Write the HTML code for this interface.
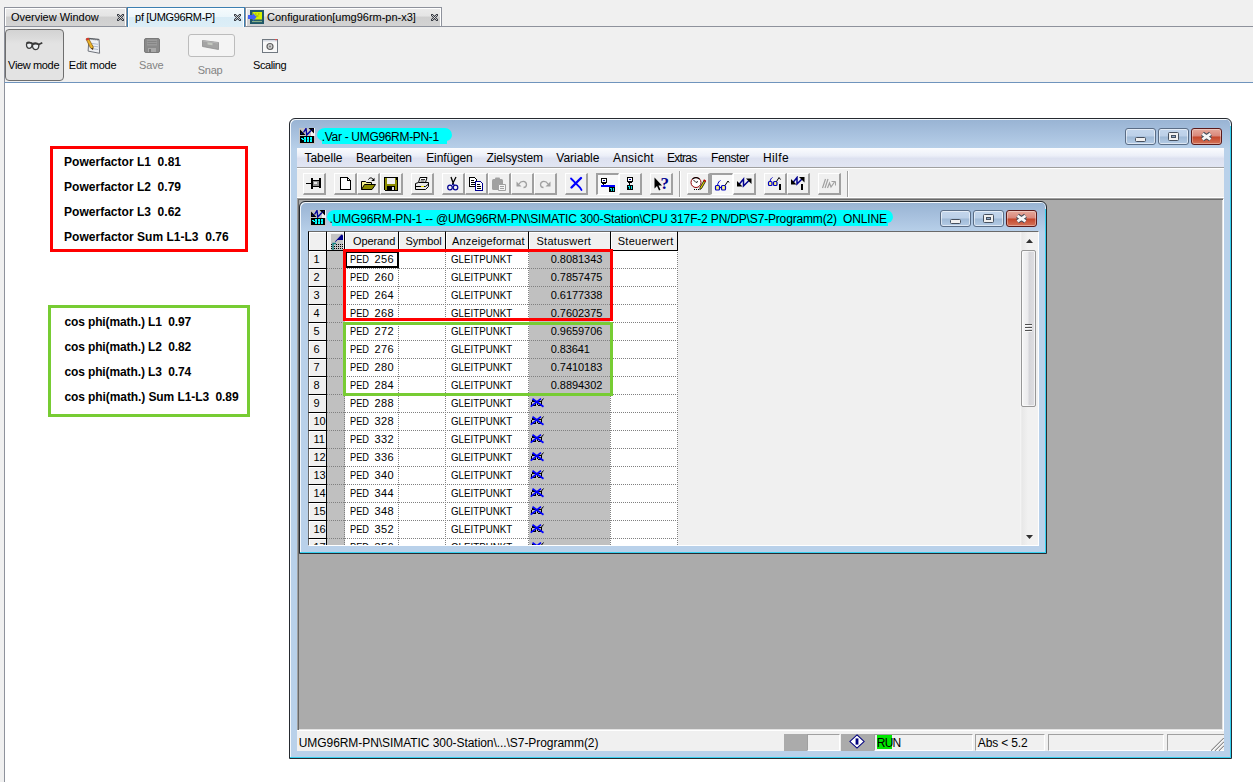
<!DOCTYPE html>
<html><head><meta charset="utf-8"><title>pf [UMG96RM-P]</title>
<style>
*{box-sizing:border-box;margin:0;padding:0}
html,body{width:1253px;height:782px;overflow:hidden;background:#f0f0f0}
body{position:relative;font-family:"Liberation Sans",sans-serif;font-size:11px;color:#000}
.a{position:absolute}
.t{position:absolute;white-space:nowrap;line-height:1}
.tab{position:absolute;top:7px;height:19px;border:1px solid #8e929c;border-bottom:0;background:linear-gradient(#ebebeb 0,#e4e4e4 45%,#cfcfcf 50%,#d3d3d3 100%);box-shadow:inset 1px 1px 0 #fff,inset -1px 0 0 #fff}
.tab.sel{height:20px;background:linear-gradient(#f6fbfd 0,#ecf6fb 45%,#d9ecf6 50%,#dceef7 100%);border-color:#3c7fb1}
.btn3{position:absolute;top:173px;width:23px;height:22px;border:solid;border-width:1px 2px 2px 1px;border-color:#fff #a0a0a0 #a0a0a0 #fff;background:#f0f0f0}
.btn3.dn{border-width:2px 1px 1px 2px;border-color:#a0a0a0 #fff #fff #a0a0a0;background:#f8f8f8}
.btn3 svg{position:absolute;left:2px;top:2px}
.btn3.dn svg{left:2px;top:2px}
.hl{position:absolute;left:327px;width:351px;height:1px;background-image:repeating-linear-gradient(90deg,#808080 0 1px,transparent 1px 2px)}
.vl{position:absolute;top:250px;width:1px;height:296px;background-image:repeating-linear-gradient(180deg,#808080 0 1px,transparent 1px 2px)}
.hd{position:absolute;border:1px solid #000;background:#f0f0f0;box-shadow:inset 1px 1px 0 #fff}
.cb{position:absolute;height:17px;border:1px solid #5a6d86;border-radius:3px;background:linear-gradient(#c3d6ec 0,#bcd0e8 48%,#9fb9d6 52%,#b4cbe5 100%);box-shadow:inset 0 0 0 1px rgba(255,255,255,.55)}
.cb.cl{border-color:#5b1a1a;background:linear-gradient(#e5a99b 0,#d9867a 48%,#c4452a 52%,#d4745a 100%);box-shadow:inset 0 0 0 1px rgba(255,255,255,.35)}
.sp{position:absolute;top:734px;height:17px;border:1px solid;border-color:#a0a0a0 #fff #fff #a0a0a0}
.fr{position:absolute;border:1px solid #262a30;border-radius:6px 6px 0 0;background:linear-gradient(#98b3d3 0,#a9c2df 16px,#b9d1ea 31px,#b9d1ea 100%);box-shadow:inset 1px 1px 0 #f2f7fc,inset -1px 0 0 #dbe8f6}
</style></head><body>
<!-- top tab bar -->
<div class="a" style="left:4px;top:26px;width:1249px;height:1px;background:#8e929c"></div>
<div class="a" style="left:4px;top:26px;width:1px;height:756px;background:#8e929c"></div>
<div class="tab" style="left:4px;width:123px"></div>
<div class="tab" style="left:245px;width:197px"></div>
<div class="tab sel" style="left:127px;width:118px"></div>
<span class="t" id="x0" style="left:10.9px;top:11.69px;font-size:11px;letter-spacing:-0.017px;">Overview Window</span>
<span class="t" id="x1" style="left:135.1px;top:11.69px;font-size:11px;letter-spacing:-0.335px;">pf [UMG96RM-P]</span>
<span class="t" id="x2" style="left:267.0px;top:11.69px;font-size:11px;letter-spacing:-0.011px;">Configuration[umg96rm-pn-x3]</span>
<svg class="a" style="left:117px;top:14px" width="7" height="7" viewBox="0 0 7 7"><path d="M1 1L6 6M6 1L1 6" stroke="#30343c" stroke-width="2.400" stroke-linecap="round" fill="none"/><path d="M1.200 1.200L5.800 5.800M5.800 1.200L1.200 5.800" stroke="#f4f4f4" stroke-width=".800" stroke-linecap="round" fill="none"/></svg>
<svg class="a" style="left:234px;top:14px" width="7" height="7" viewBox="0 0 7 7"><path d="M1 1L6 6M6 1L1 6" stroke="#30343c" stroke-width="2.400" stroke-linecap="round" fill="none"/><path d="M1.200 1.200L5.800 5.800M5.800 1.200L1.200 5.800" stroke="#f4f4f4" stroke-width=".800" stroke-linecap="round" fill="none"/></svg>
<svg class="a" style="left:431px;top:14px" width="7" height="7" viewBox="0 0 7 7"><path d="M1 1L6 6M6 1L1 6" stroke="#30343c" stroke-width="2.400" stroke-linecap="round" fill="none"/><path d="M1.200 1.200L5.800 5.800M5.800 1.200L1.200 5.800" stroke="#f4f4f4" stroke-width=".800" stroke-linecap="round" fill="none"/></svg>
<svg class="a" style="left:248px;top:10px" width="16" height="14" viewBox="0 0 16 14"><rect x="2" y="0" width="14" height="14" fill="#205868"/><rect x="4.500" y="2" width="9.500" height="7.500" fill="#d4f000"/><path d="M7 4h1.500M10 4h1.500M8 6h2.500" stroke="#809020" stroke-width=".800"/><path d="M4 11.500h10" stroke="#88b088" stroke-width="1.200"/><path d="M0 5h5V3L8.700 7L5 11V9H0z" fill="#4060f8"/></svg>
<!-- toolbar -->
<div class="a" style="left:5px;top:29px;width:59px;height:52px;border:1px solid #6e6e6e;border-radius:4px;background:linear-gradient(#d3d3d3 0,#dcdcdc 9px,#e0e0e0 11px,#e3e3e3 14px,#e3e3e3 100%)"></div>
<span class="t" id="x3" style="left:8.1px;top:59.69px;font-size:11px;letter-spacing:-0.352px;">View mode</span>
<span class="t" id="x4" style="left:68.8px;top:59.69px;font-size:11px;letter-spacing:-0.216px;">Edit mode</span>
<span class="t" id="x5" style="left:139.0px;top:59.69px;font-size:11px;letter-spacing:-0.126px;color:#838383;">Save</span>
<span class="t" id="x6" style="left:197.8px;top:64.69px;font-size:11px;letter-spacing:-0.268px;color:#838383;">Snap</span>
<span class="t" id="x7" style="left:253.0px;top:59.69px;font-size:11px;letter-spacing:-0.413px;">Scaling</span>
<div class="a" style="left:188px;top:34px;width:47px;height:23px;border:1px solid #bcbcbc;border-radius:3px;background:#f4f4f4"></div>
<svg class="a" style="left:25px;top:41px" width="18" height="10" viewBox="0 0 18 10"><g fill="#eef1f4" stroke="#3c3c3c" stroke-width="1.300"><path d="M1.500 3.500C1.500 1.500 6.500 1.500 7 3C7.300 5 6.500 7.300 4.300 7.300C2.300 7.300 1.500 5.500 1.500 3.500Z"/><path d="M7.500 4.300C8 2.300 13.500 2.500 13.800 4C14 6.500 13 8.700 10.800 8.700C8.500 8.700 7.300 6.500 7.500 4.300Z"/></g><path d="M1.500 2.300C3 1 6.500 1.300 7.500 2.800C9.500 2 12.500 2.300 13.800 3.500L17.300 1.800" stroke="#3a3a3a" stroke-width="1.700" fill="none"/></svg>
<svg class="a" style="left:84px;top:37px" width="17" height="17" viewBox="0 0 17 17"><path d="M5 1.300L15.100 2.400L15.600 16.300L4.100 14.100Z" fill="#eef0f4" stroke="#70747c"/><path d="M5.500 1.800L14.800 2.800" stroke="#404448" stroke-width="1.600" stroke-dasharray="1 1"/><path d="M8 6.500L14 7.300M7.800 9L14 9.800M7.500 11.500L14 12.500" stroke="#a8b4c8" stroke-width=".900"/><path d="M2 2L4.300 1L9.300 10L8.800 12.500L6.500 11Z" fill="#ecb428" stroke="#7a5010" stroke-width=".700"/><path d="M1.800 1.800L4.300 .800L5.200 2.500L2.800 3.500Z" fill="#d83030"/><path d="M7 11.300L8.800 12.800L8.900 10.800Z" fill="#403020"/></svg>
<svg class="a" style="left:144px;top:38px" width="16" height="15" viewBox="0 0 16 15"><rect x=".5" y=".5" width="15" height="14" rx="1.500" fill="#8a8a8a" stroke="#7a7a7a"/><rect x="3" y="1.500" width="10" height="6" fill="#9a9a9a"/><path d="M3.500 3.500h9M3.500 5.500h9" stroke="#858585"/><rect x="4" y="10" width="8" height="4" fill="#a8a8a8"/><rect x="5" y="11" width="2" height="3" fill="#7a7a7a"/></svg>
<svg class="a" style="left:202px;top:39px" width="17" height="11" viewBox="0 0 17 11"><path d="M.5 1.500L16.500 3.500V10.500L.5 7.500Z" fill="#a4a4a4" stroke="#8e8e8e" stroke-width=".800"/><path d="M5.500 3.200L10.500 3.900V6.300L5.500 5.500Z" fill="#c4c8c0"/><path d="M1 2L16 4" stroke="#c0c0c0" stroke-width=".700"/></svg>
<svg class="a" style="left:262px;top:39px" width="16" height="14" viewBox="0 0 16 14"><rect x=".5" y=".5" width="15" height="13" fill="#f8f8f8" stroke="#707880"/><rect x="1" y="1" width="14" height="1.500" fill="#d8dce4"/><rect x="13" y="0" width="2" height="1.200" fill="#e05050"/><circle cx="8" cy="7.500" r="3" fill="#d0d0d0" stroke="#606060" stroke-width="1.200"/><circle cx="8" cy="7.500" r="1" fill="#808080"/></svg>
<!-- content -->
<div class="a" style="left:4px;top:82px;width:1249px;height:700px;background:#fff;border-left:1px solid #8e929c;border-top:1px solid #6f94bd"></div>
<div class="a" style="left:50px;top:146px;width:198px;height:106px;border:3px solid #ff0000"></div>
<div class="a" style="left:48px;top:305px;width:202px;height:112px;border:3px solid #77cc33"></div>
<span class="t" id="x8" style="left:64.1px;top:155.84px;font-size:12px;letter-spacing:0.01px;font-weight:bold;">Powerfactor L1&nbsp; 0.81</span>
<span class="t" id="x9" style="left:64.1px;top:180.84px;font-size:12px;letter-spacing:0.01px;font-weight:bold;">Powerfactor L2&nbsp; 0.79</span>
<span class="t" id="x10" style="left:64.1px;top:205.84px;font-size:12px;letter-spacing:0.01px;font-weight:bold;">Powerfactor L3&nbsp; 0.62</span>
<span class="t" id="x11" style="left:64.1px;top:230.84px;font-size:12px;letter-spacing:0.021px;font-weight:bold;">Powerfactor Sum L1-L3&nbsp; 0.76</span>
<span class="t" id="x12" style="left:64.4px;top:315.84px;font-size:12px;letter-spacing:-0.117px;font-weight:bold;">cos phi(math.) L1&nbsp; 0.97</span>
<span class="t" id="x13" style="left:64.4px;top:340.84px;font-size:12px;letter-spacing:-0.117px;font-weight:bold;">cos phi(math.) L2&nbsp; 0.82</span>
<span class="t" id="x14" style="left:64.4px;top:365.84px;font-size:12px;letter-spacing:-0.117px;font-weight:bold;">cos phi(math.) L3&nbsp; 0.74</span>
<span class="t" id="x15" style="left:64.4px;top:390.84px;font-size:12px;letter-spacing:-0.086px;font-weight:bold;">cos phi(math.) Sum L1-L3&nbsp; 0.89</span>
<!-- main window -->
<div class="fr" style="left:289px;top:118px;width:943px;height:641px"></div>
<div class="a" style="left:290px;top:757px;width:941px;height:1px;background:#35d0f0"></div>
<div class="a" style="left:1230px;top:126px;width:1px;height:632px;background:#35d0f0"></div>
<div class="a" style="left:297px;top:148px;width:927px;height:603px;background:#f0f0f0"></div>
<svg class="a" style="left:299px;top:128px" width="16" height="16" viewBox="0 0 16 16"><rect width="16" height="16" fill="#c4c4c4"/><rect x="12" y="0" width="4" height="8" fill="#f4f4f4"/><path d="M1 1.500V7H6.500Z" fill="#000"/><path d="M2 4.500V6H3.800Z" fill="#0000a0"/><path d="M9.500 0H15V5.500Z" fill="#000"/><path d="M12.500 1H14V2.500Z" fill="#0000a0"/><path d="M4.500 4.500L7 .500L7.800 7L12 2.500" stroke="#00009c" stroke-width="1.400" fill="none"/><rect x="1" y="8" width="14" height="7" fill="#000" shape-rendering="crispEdges"/><path d="M5 9h2v5H5zM8 9h2v5H8zM11 9h2v5h-2z" fill="#00ffff" shape-rendering="crispEdges"/><path d="M2 10h2v1H2zM3 11h2v1H3z" fill="#00ffff" shape-rendering="crispEdges"/><path d="M5.500 11.500h7" stroke="#000" stroke-width=".600" stroke-dasharray=".6 .9"/></svg>
<div class="a" style="left:317px;top:128px;width:135px;height:13px;background:#00ffff;border-radius:8px 7px 6px 7px/7px 7px 6px 6px"></div>
<div class="a" style="left:322px;top:136px;width:125px;height:8px;background:#00ffff"></div>
<span class="t" id="x16" style="left:321.8px;top:130.84px;font-size:12px;letter-spacing:-0.318px;">.Var - UMG96RM-PN-1</span>
<div class="cb" style="left:1125px;top:128px;width:31px"><div class="a" style="left:9px;top:8px;width:11px;height:5px;border:1px solid #46505f;border-radius:1.5px;background:#f0f0f0"></div></div>
<div class="cb" style="left:1158px;top:128px;width:31px"><div class="a" style="left:9px;top:3px;width:11px;height:9px;border:1px solid #46505f;border-radius:1.5px;background:#f0f0f0"><div class="a" style="left:2px;top:2px;width:5px;height:3px;border:1px solid #46505f;background:#8fa9c9"></div></div></div>
<div class="cb cl" style="left:1191px;top:128px;width:31px"><svg class="a" style="left:8px;top:2px" width="13" height="11" viewBox="0 0 13 11"><path d="M2.500 2.800L10.500 8.400M10.500 2.800L2.500 8.400" stroke="#434c5a" stroke-width="4.800" fill="none"/><path d="M2.500 2.800L10.500 8.400M10.500 2.800L2.500 8.400" stroke="#f6f6f6" stroke-width="2.700" fill="none"/></svg></div>
<div class="a" style="left:297px;top:148px;width:927px;height:20px;background:linear-gradient(#fbfcfe 0,#eceff8 40%,#dde1f0 55%,#e2e6f3 100%);border-bottom:1px solid #a0a0a0"></div>
<span class="t" id="x17" style="left:304.4px;top:151.84px;font-size:12px;letter-spacing:0.011px;">Tabelle</span>
<span class="t" id="x18" style="left:356.1px;top:151.84px;font-size:12px;letter-spacing:-0.239px;">Bearbeiten</span>
<span class="t" id="x19" style="left:426.2px;top:151.84px;font-size:12px;letter-spacing:-0.111px;">Einfügen</span>
<span class="t" id="x20" style="left:486.4px;top:151.84px;font-size:12px;letter-spacing:-0.083px;">Zielsystem</span>
<span class="t" id="x21" style="left:556.3px;top:151.84px;font-size:12px;letter-spacing:-0.006px;">Variable</span>
<span class="t" id="x22" style="left:612.9px;top:151.84px;font-size:12px;letter-spacing:0.24px;">Ansicht</span>
<span class="t" id="x23" style="left:666.9px;top:151.84px;font-size:12px;letter-spacing:-0.723px;">Extras</span>
<span class="t" id="x24" style="left:711.1px;top:151.84px;font-size:12px;letter-spacing:-0.431px;">Fenster</span>
<span class="t" id="x25" style="left:762.9px;top:151.84px;font-size:12px;letter-spacing:0.421px;">Hilfe</span>
<div class="a" style="left:297px;top:168px;width:927px;height:1px;background:#fff"></div>
<div class="btn3" style="left:303px"><svg width="16" height="16" viewBox="0 0 16 16" shape-rendering="crispEdges"><path d="M0 7.500H6" stroke="#000" fill="none"/><path d="M5 2h2v11H5z" fill="#000"/><path d="M7 4h6v7H7z" fill="#000"/><path d="M7 5h6v5H7z" fill="#909090"/><path d="M8 6h3v2H8z" fill="#e8e8e8"/><path d="M13 2h2v10h-2z" fill="#000"/></svg></div>
<div class="btn3" style="left:334px"><svg width="16" height="16" viewBox="0 0 16 16" shape-rendering="crispEdges"><path d="M3.500 1.500H10.500L13.500 4.500V13.500H3.500Z" fill="#fff" stroke="#000"/><path d="M10.500 1.500V4.500H13.500" fill="none" stroke="#000"/></svg></div>
<div class="btn3" style="left:357px"><svg width="16" height="16" viewBox="0 0 16 16"><path d="M1.500 13.500V5.500H5.500L6.500 6.500H11.500V8.500" fill="#f4f08c" stroke="#000" stroke-width="1"/><path d="M1.500 13.500L4.500 8.500H15.500L12 13.500Z" fill="#8c8c00" stroke="#000" stroke-width="1"/><path d="M8.500 3.500C9.500 1.300 12.500 1.300 13.500 4" fill="none" stroke="#000"/><path d="M14.500 1.800V5H11.300Z" fill="#000"/></svg></div>
<div class="btn3" style="left:380px"><svg width="16" height="16" viewBox="0 0 16 16" shape-rendering="crispEdges"><path d="M1 1h14v14H2l-1-1z" fill="#8c8c00"/><path d="M1.500 1.500H14.500V14.500H2.500L1.500 13.500Z" fill="none" stroke="#000"/><path d="M4 2h8v6H4z" fill="#f0f0f0"/><path d="M4 10h8v5H4z" fill="#000"/><path d="M9 11h2v3H9z" fill="#e0e0e0"/><path d="M13 2h1v2h-1z" fill="#000"/></svg></div>
<div class="btn3" style="left:411px"><svg width="16" height="16" viewBox="0 0 16 16"><path d="M4.5 6.5L6 1.5H13L11.5 6.5" fill="#fff" stroke="#000"/><path d="M7 3.5h4M6.5 5h4" stroke="#000" fill="none" stroke-width=".8"/><path d="M1.5 7.5L4.5 6.5H14.5V10.500L11.500 13.500H1.500Z" fill="#e8e8e8" stroke="#000"/><path d="M1.5 10.5H11.5L14.5 8" fill="none" stroke="#000"/><path d="M7 10h3v1H7z" fill="#f0e000"/></svg></div>
<div class="btn3" style="left:442px"><svg width="16" height="16" viewBox="0 0 16 16"><path d="M6 1L8.5 8M11 1L7.500 8" stroke="#000" stroke-width="1.3" fill="none"/><circle cx="5" cy="11.5" r="2.300" fill="none" stroke="#000090" stroke-width="1.2"/><circle cx="10.5" cy="11.500" r="2.300" fill="none" stroke="#000090" stroke-width="1.2"/><path d="M6.500 9.500L8 8L10 9.500" stroke="#000090" fill="none"/></svg></div>
<div class="btn3" style="left:465px"><svg width="16" height="16" viewBox="0 0 16 16" shape-rendering="crispEdges"><path d="M1.5 1.5H6.500L8.500 3.500V10.500H1.500Z" fill="#fff" stroke="#000"/><path d="M3 4h3M3 6h4M3 8h4" stroke="#000" fill="none"/><path d="M7.500 5.500H12.500L14.500 7.500V14.500H7.500Z" fill="#fff" stroke="#000090"/><path d="M9 8.500h3M9 10.500h4M9 12.500h4" stroke="#000" fill="none"/></svg></div>
<div class="btn3" style="left:488px"><svg width="16" height="16" viewBox="0 0 16 16"><rect x="1" y="3" width="11" height="11" rx="1.500" fill="#a0a0a0"/><rect x="4" y="1.500" width="5" height="3" rx="1" fill="#a0a0a0"/><path d="M7.500 8.500H14.500V14.500H7.500Z" fill="#f4f4f4" stroke="#a0a0a0"/><path d="M9 10.500h4M9 12.500h4" stroke="#a0a0a0" fill="none"/></svg></div>
<div class="btn3" style="left:511px"><svg width="16" height="16" viewBox="0 0 16 16"><path d="M5 8C7 4.500 12 4.500 12.500 8.500C12.500 11 10.500 11.500 9.500 11.500" fill="none" stroke="#a0a0a0" stroke-width="1.300"/><path d="M2.500 5.500V10.500H7.500Z" fill="#a0a0a0"/></svg></div>
<div class="btn3" style="left:534px"><svg width="16" height="16" viewBox="0 0 16 16"><path d="M11 8C9 4.500 4 4.500 3.500 8.500C3.500 11 5.500 11.500 6.500 11.500" fill="none" stroke="#a0a0a0" stroke-width="1.300"/><path d="M13.500 5.500V10.500H8.500Z" fill="#a0a0a0"/></svg></div>
<div class="btn3" style="left:565px"><svg width="16" height="16" viewBox="0 0 16 16"><path d="M3 2.500L12 11.500L13.500 14" stroke="#0000ff" stroke-width="1.800" fill="none" stroke-linecap="round"/><path d="M13 2L5 10L3.500 11.500" stroke="#0000ff" stroke-width="2.400" fill="none" stroke-linecap="round"/></svg></div>
<div class="btn3 dn" style="left:596px"><svg width="16" height="16" viewBox="0 0 16 16" shape-rendering="crispEdges"><rect x="1.500" y="1.500" width="5" height="4" fill="#fff" stroke="#000"/><path d="M3 3h2v1H3z" fill="#000090"/><path d="M3.500 6v2" stroke="#000" fill="none"/><path d="M2 6.500h4" stroke="#000" fill="none"/><path d="M1 8h14v2H1z" fill="#0000ff"/><path d="M9 10h6v5H9z" fill="#000"/><path d="M11 11h1v3h-1zM13 11h1v3h-1z" fill="#00e0e0"/><path d="M10 11h1v1h-1z" fill="#00e0e0"/></svg></div>
<div class="btn3" style="left:619px"><svg width="16" height="16" viewBox="0 0 16 16" shape-rendering="crispEdges"><rect x="5.500" y="1.500" width="5" height="4" fill="#fff" stroke="#000"/><path d="M7 3h2v1H7z" fill="#000090"/><path d="M7.500 6v3" stroke="#000" fill="none"/><path d="M6 6.500h4" stroke="#000" fill="none"/><path d="M5 9h6v5H5z" fill="#000"/><path d="M7 10h1v3H7zM9 10h1v3H9z" fill="#00e0e0"/><path d="M6 10h1v1H6z" fill="#00e0e0"/></svg></div>
<div class="btn3" style="left:650px"><svg width="16" height="16" viewBox="0 0 16 16"><path d="M1.500 1.500V12.500L4 10L6 14.500L7.500 13.800L5.500 9.500H9Z" fill="#000"/><text x="7.500" y="13" font-family="Liberation Serif,serif" font-weight="bold" font-size="17" fill="#000090">?</text></svg></div>
<div class="btn3" style="left:687px"><svg width="16" height="16" viewBox="0 0 16 16"><circle cx="6" cy="6.500" r="5" fill="#fff" stroke="#900000" stroke-width="1"/><path d="M2.500 3A5 5 0 0 1 9.500 3" stroke="#000" fill="none" stroke-width="1.200"/><path d="M3.500 4L6 6.500L8 5.500" stroke="#000" fill="none" stroke-width=".9"/><path d="M4 13.500h1M6 13.500h1M8 13.500h1" stroke="#000" fill="none"/><path d="M10 11.500L14 4.500L15.500 5.500L11.500 12.500L9.800 13.500Z" fill="#f0e000" stroke="#000" stroke-width=".8"/><path d="M13.600 4L15.800 5.300" stroke="#c00000" stroke-width="1.500"/></svg></div>
<div class="btn3 dn" style="left:710px"><svg width="16" height="16" viewBox="0 0 16 16"><rect x="1.500" y="8.500" width="4" height="4.500" rx="1" fill="#f8f080" stroke="#0000c0" stroke-width="1.200"/><rect x="7.500" y="8.500" width="4" height="4.500" rx="1" fill="#f8f080" stroke="#0000c0" stroke-width="1.200"/><path d="M5.500 10.500h2" stroke="#0000c0" fill="none"/><path d="M3.500 8.500C4 5 5.500 4 6.500 3.500" stroke="#0000c0" fill="none"/><path d="M11 8.500L14 4L15 5.500" stroke="#000" fill="none"/></svg></div>
<div class="btn3" style="left:733px"><svg width="16" height="16" viewBox="0 0 16 16"><path d="M3 8.500L7.500 3V10L13 4.500" stroke="#000090" stroke-width="1.500" fill="none"/><path d="M1 5V10.500H6.500Z" fill="#000"/><path d="M10 2.500H15.500V8Z" fill="#000"/></svg></div>
<div class="btn3" style="left:764px"><svg width="16" height="16" viewBox="0 0 16 16"><rect x="1.500" y="5.500" width="3.500" height="4" rx="1" fill="#f8f080" stroke="#0000c0" stroke-width="1.200"/><rect x="6.500" y="5.500" width="3.500" height="4" rx="1" fill="#f8f080" stroke="#0000c0" stroke-width="1.200"/><path d="M3 5.500C3.500 3 4.500 2 5.500 1.500" stroke="#0000c0" fill="none"/><path d="M9.500 5.500L12 1.500L13.500 3.500" stroke="#000" fill="none"/><path d="M12 8h2v6h-2z" fill="#000" shape-rendering="crispEdges"/></svg></div>
<div class="btn3" style="left:787px"><svg width="16" height="16" viewBox="0 0 16 16"><path d="M3 6.500L7 1.500V8L12 3" stroke="#000090" stroke-width="1.500" fill="none"/><path d="M1 3V8.500H6.500Z" fill="#000"/><path d="M9 1H14.500V6.500Z" fill="#000"/><path d="M11 8h2v6h-2z" fill="#000" shape-rendering="crispEdges"/></svg></div>
<div class="btn3" style="left:818px"><svg width="16" height="16" viewBox="0 0 16 16"><path d="M1.500 12L4.500 3M4 12L7 3M6.500 12L8.500 7L10 11L13.500 6" stroke="#a0a0a0" stroke-width="1.200" fill="none"/><path d="M10.500 5.500H14.500V9.500" fill="none" stroke="#a0a0a0"/></svg></div>
<div class="a" style="left:679px;top:171px;width:2px;height:26px;border-left:1px solid #a0a0a0;border-right:1px solid #fff"></div>
<div class="a" style="left:847px;top:171px;width:2px;height:26px;border-left:1px solid #a0a0a0;border-right:1px solid #fff"></div>
<div class="a" style="left:297px;top:197px;width:927px;height:1px;background:#fff"></div>
<div class="a" style="left:297px;top:198px;width:927px;height:533px;background:#ababab;border:1px solid;border-color:#a0a0a0 #fff #fff #a0a0a0;box-shadow:inset 1px 1px 0 #696969,inset -1px -1px 0 #e3e3e3"></div>
<!-- child window -->
<div class="fr" style="left:299px;top:201px;width:748px;height:353px"></div>
<div class="a" style="left:300px;top:552px;width:746px;height:1px;background:#35d0f0"></div>
<div class="a" style="left:1045px;top:209px;width:1px;height:344px;background:#35d0f0"></div>
<svg class="a" style="left:310px;top:210px" width="16" height="16" viewBox="0 0 16 16"><rect width="16" height="16" fill="#c4c4c4"/><rect x="12" y="0" width="4" height="8" fill="#f4f4f4"/><path d="M1 1.500V7H6.500Z" fill="#000"/><path d="M2 4.500V6H3.800Z" fill="#0000a0"/><path d="M9.500 0H15V5.500Z" fill="#000"/><path d="M12.500 1H14V2.500Z" fill="#0000a0"/><path d="M4.500 4.500L7 .500L7.800 7L12 2.500" stroke="#00009c" stroke-width="1.400" fill="none"/><rect x="1" y="8" width="14" height="7" fill="#000" shape-rendering="crispEdges"/><path d="M5 9h2v5H5zM8 9h2v5H8zM11 9h2v5h-2z" fill="#00ffff" shape-rendering="crispEdges"/><path d="M2 10h2v1H2zM3 11h2v1H3z" fill="#00ffff" shape-rendering="crispEdges"/><path d="M5.500 11.500h7" stroke="#000" stroke-width=".600" stroke-dasharray=".6 .9"/></svg>
<div class="a" style="left:327px;top:210px;width:566px;height:13px;background:#00ffff;border-radius:8px 7px 6px 7px/7px 7px 6px 6px"></div>
<div class="a" style="left:332px;top:218px;width:556px;height:8px;background:#00ffff"></div>
<span class="t" id="x26" style="left:329.5px;top:212.84px;font-size:12px;letter-spacing:-0.168px;">.UMG96RM-PN-1 -- @UMG96RM-PN\SIMATIC 300-Station\CPU 317F-2 PN/DP\S7-Programm(2)&nbsp; ONLINE</span>
<div class="cb" style="left:940px;top:210px;width:31px"><div class="a" style="left:9px;top:8px;width:11px;height:5px;border:1px solid #46505f;border-radius:1.5px;background:#f0f0f0"></div></div>
<div class="cb" style="left:973px;top:210px;width:31px"><div class="a" style="left:9px;top:3px;width:11px;height:9px;border:1px solid #46505f;border-radius:1.5px;background:#f0f0f0"><div class="a" style="left:2px;top:2px;width:5px;height:3px;border:1px solid #46505f;background:#8fa9c9"></div></div></div>
<div class="cb cl" style="left:1006px;top:210px;width:31px"><svg class="a" style="left:8px;top:2px" width="13" height="11" viewBox="0 0 13 11"><path d="M2.500 2.800L10.500 8.400M10.500 2.800L2.500 8.400" stroke="#434c5a" stroke-width="4.800" fill="none"/><path d="M2.500 2.800L10.500 8.400M10.500 2.800L2.500 8.400" stroke="#f6f6f6" stroke-width="2.700" fill="none"/></svg></div>
<div class="a" style="left:308px;top:231px;width:731px;height:315px;background:#f0f0f0;border-top:1px solid #696969;border-left:1px solid #a0a0a0;border-bottom:1px solid #fff;border-right:1px solid #fff"></div>
<div class="a" style="left:0;top:0;width:1039px;height:545px;overflow:hidden">
<div class="a" style="left:345px;top:251px;width:333px;height:295px;background:#fff"></div>
<div class="a" style="left:327px;top:251px;width:18px;height:295px;background:#c0c0c0"></div>
<div class="a" style="left:529px;top:251px;width:81px;height:295px;background:#c0c0c0"></div>
<div class="hl" style="top:268px"></div>
<div class="hl" style="top:286px"></div>
<div class="hl" style="top:304px"></div>
<div class="hl" style="top:322px"></div>
<div class="hl" style="top:340px"></div>
<div class="hl" style="top:358px"></div>
<div class="hl" style="top:376px"></div>
<div class="hl" style="top:394px"></div>
<div class="hl" style="top:412px"></div>
<div class="hl" style="top:430px"></div>
<div class="hl" style="top:448px"></div>
<div class="hl" style="top:466px"></div>
<div class="hl" style="top:484px"></div>
<div class="hl" style="top:502px"></div>
<div class="hl" style="top:520px"></div>
<div class="hl" style="top:538px"></div>
<div class="hl" style="top:556px"></div>
<div class="vl" style="left:344px"></div>
<div class="vl" style="left:398px"></div>
<div class="vl" style="left:445px"></div>
<div class="vl" style="left:528px"></div>
<div class="vl" style="left:610px"></div>
<div class="vl" style="left:677px"></div>
<div class="hd" style="left:308px;top:231px;width:19px;height:20px;border-top-color:#696969"></div>
<div class="hd" style="left:326px;top:231px;width:19px;height:20px;border-top-color:#696969"></div>
<div class="hd" style="left:344px;top:231px;width:55px;height:20px;border-top-color:#696969"></div>
<div class="hd" style="left:398px;top:231px;width:48px;height:20px;border-top-color:#696969"></div>
<div class="hd" style="left:445px;top:231px;width:84px;height:20px;border-top-color:#696969"></div>
<div class="hd" style="left:528px;top:231px;width:83px;height:20px;border-top-color:#696969"></div>
<div class="hd" style="left:610px;top:231px;width:68px;height:20px;border-top-color:#696969"></div>
<span class="t" id="x27" style="left:352.9px;top:235.69px;font-size:11px;letter-spacing:-0.069px;">Operand</span>
<span class="t" id="x28" style="left:405.6px;top:235.69px;font-size:11px;letter-spacing:-0.118px;">Symbol</span>
<span class="t" id="x29" style="left:452.1px;top:235.69px;font-size:11px;letter-spacing:0.122px;">Anzeigeformat</span>
<span class="t" id="x30" style="left:536.5px;top:235.69px;font-size:11px;letter-spacing:0.27px;">Statuswert</span>
<span class="t" id="x31" style="left:617.7px;top:235.69px;font-size:11px;letter-spacing:0.277px;">Steuerwert</span>
<svg class="a" style="left:331px;top:234px" width="12" height="16" viewBox="0 0 12 16"><rect width="12" height="16" fill="#c4c4c4"/><path d="M4 7.500L10.500 .500L12 1.500V6H6.500L4.500 8Z" fill="#00008c"/><path d="M2 16V9.500H5" stroke="#108080" stroke-width="1.400" fill="none"/><g fill="#000" shape-rendering="crispEdges"><path d="M0 10h1v1H0zM0 12h1v1H0zM0 14h1v1H0z"/><path d="M5 10h1v1H5zM7 10h1v1H7zM9 10h1v1H9zM11 10h1v1h-1zM5 12h1v1H5zM7 12h1v1H7zM9 12h1v1H9zM11 12h1v1h-1zM5 14h1v1H5zM7 14h1v1H7zM9 14h1v1H9zM11 14h1v1h-1zM3 12h1v1H3zM3 14h1v1H3z"/></g></svg>
<div class="hd" style="left:308px;top:250px;width:19px;height:19px;border-left-color:#696969"></div>
<span class="t" id="x32" style="left:313.4px;top:253.69px;font-size:11px;letter-spacing:0px;">1</span>
<span class="t" id="x33" style="left:350.0px;top:253.69px;font-size:11px;transform-origin:0 0;transform:scaleX(0.84);">PED</span>
<span class="t" id="x34" style="left:374.5px;top:253.69px;font-size:11px;letter-spacing:0.32px;">256</span>
<span class="t" id="x35" style="left:450.8px;top:253.69px;font-size:11px;transform-origin:0 0;transform:scaleX(0.886);">GLEITPUNKT</span>
<span class="t" id="x36" style="left:550.8px;top:253.69px;font-size:11px;letter-spacing:-0.062px;">0.8081343</span>
<div class="hd" style="left:308px;top:268px;width:19px;height:19px;border-left-color:#696969"></div>
<span class="t" id="x37" style="left:313.4px;top:271.69px;font-size:11px;letter-spacing:0px;">2</span>
<span class="t" id="x38" style="left:350.0px;top:271.69px;font-size:11px;transform-origin:0 0;transform:scaleX(0.84);">PED</span>
<span class="t" id="x39" style="left:374.5px;top:271.69px;font-size:11px;letter-spacing:0.32px;">260</span>
<span class="t" id="x40" style="left:450.8px;top:271.69px;font-size:11px;transform-origin:0 0;transform:scaleX(0.886);">GLEITPUNKT</span>
<span class="t" id="x41" style="left:550.8px;top:271.69px;font-size:11px;letter-spacing:-0.062px;">0.7857475</span>
<div class="hd" style="left:308px;top:286px;width:19px;height:19px;border-left-color:#696969"></div>
<span class="t" id="x42" style="left:313.4px;top:289.69px;font-size:11px;letter-spacing:0px;">3</span>
<span class="t" id="x43" style="left:350.0px;top:289.69px;font-size:11px;transform-origin:0 0;transform:scaleX(0.84);">PED</span>
<span class="t" id="x44" style="left:374.5px;top:289.69px;font-size:11px;letter-spacing:0.32px;">264</span>
<span class="t" id="x45" style="left:450.8px;top:289.69px;font-size:11px;transform-origin:0 0;transform:scaleX(0.886);">GLEITPUNKT</span>
<span class="t" id="x46" style="left:550.8px;top:289.69px;font-size:11px;letter-spacing:-0.062px;">0.6177338</span>
<div class="hd" style="left:308px;top:304px;width:19px;height:19px;border-left-color:#696969"></div>
<span class="t" id="x47" style="left:313.4px;top:307.69px;font-size:11px;letter-spacing:0px;">4</span>
<span class="t" id="x48" style="left:350.0px;top:307.69px;font-size:11px;transform-origin:0 0;transform:scaleX(0.84);">PED</span>
<span class="t" id="x49" style="left:374.5px;top:307.69px;font-size:11px;letter-spacing:0.32px;">268</span>
<span class="t" id="x50" style="left:450.8px;top:307.69px;font-size:11px;transform-origin:0 0;transform:scaleX(0.886);">GLEITPUNKT</span>
<span class="t" id="x51" style="left:550.8px;top:307.69px;font-size:11px;letter-spacing:-0.062px;">0.7602375</span>
<div class="hd" style="left:308px;top:322px;width:19px;height:19px;border-left-color:#696969"></div>
<span class="t" id="x52" style="left:313.4px;top:325.69px;font-size:11px;letter-spacing:0px;">5</span>
<span class="t" id="x53" style="left:350.0px;top:325.69px;font-size:11px;transform-origin:0 0;transform:scaleX(0.84);">PED</span>
<span class="t" id="x54" style="left:374.5px;top:325.69px;font-size:11px;letter-spacing:0.32px;">272</span>
<span class="t" id="x55" style="left:450.8px;top:325.69px;font-size:11px;transform-origin:0 0;transform:scaleX(0.886);">GLEITPUNKT</span>
<span class="t" id="x56" style="left:550.8px;top:325.69px;font-size:11px;letter-spacing:-0.062px;">0.9659706</span>
<div class="hd" style="left:308px;top:340px;width:19px;height:19px;border-left-color:#696969"></div>
<span class="t" id="x57" style="left:313.4px;top:343.69px;font-size:11px;letter-spacing:0px;">6</span>
<span class="t" id="x58" style="left:350.0px;top:343.69px;font-size:11px;transform-origin:0 0;transform:scaleX(0.84);">PED</span>
<span class="t" id="x59" style="left:374.5px;top:343.69px;font-size:11px;letter-spacing:0.32px;">276</span>
<span class="t" id="x60" style="left:450.8px;top:343.69px;font-size:11px;transform-origin:0 0;transform:scaleX(0.886);">GLEITPUNKT</span>
<span class="t" id="x61" style="left:550.8px;top:343.69px;font-size:11px;letter-spacing:-0.108px;">0.83641</span>
<div class="hd" style="left:308px;top:358px;width:19px;height:19px;border-left-color:#696969"></div>
<span class="t" id="x62" style="left:313.4px;top:361.69px;font-size:11px;letter-spacing:0px;">7</span>
<span class="t" id="x63" style="left:350.0px;top:361.69px;font-size:11px;transform-origin:0 0;transform:scaleX(0.84);">PED</span>
<span class="t" id="x64" style="left:374.5px;top:361.69px;font-size:11px;letter-spacing:0.32px;">280</span>
<span class="t" id="x65" style="left:450.8px;top:361.69px;font-size:11px;transform-origin:0 0;transform:scaleX(0.886);">GLEITPUNKT</span>
<span class="t" id="x66" style="left:550.8px;top:361.69px;font-size:11px;letter-spacing:-0.062px;">0.7410183</span>
<div class="hd" style="left:308px;top:376px;width:19px;height:19px;border-left-color:#696969"></div>
<span class="t" id="x67" style="left:313.4px;top:379.69px;font-size:11px;letter-spacing:0px;">8</span>
<span class="t" id="x68" style="left:350.0px;top:379.69px;font-size:11px;transform-origin:0 0;transform:scaleX(0.84);">PED</span>
<span class="t" id="x69" style="left:374.5px;top:379.69px;font-size:11px;letter-spacing:0.32px;">284</span>
<span class="t" id="x70" style="left:450.8px;top:379.69px;font-size:11px;transform-origin:0 0;transform:scaleX(0.886);">GLEITPUNKT</span>
<span class="t" id="x71" style="left:550.8px;top:379.69px;font-size:11px;letter-spacing:-0.062px;">0.8894302</span>
<div class="hd" style="left:308px;top:394px;width:19px;height:19px;border-left-color:#696969"></div>
<span class="t" id="x72" style="left:313.4px;top:397.69px;font-size:11px;letter-spacing:0px;">9</span>
<span class="t" id="x73" style="left:350.0px;top:397.69px;font-size:11px;transform-origin:0 0;transform:scaleX(0.84);">PED</span>
<span class="t" id="x74" style="left:374.5px;top:397.69px;font-size:11px;letter-spacing:0.32px;">288</span>
<span class="t" id="x75" style="left:450.8px;top:397.69px;font-size:11px;transform-origin:0 0;transform:scaleX(0.886);">GLEITPUNKT</span>
<svg class="a" style="left:530px;top:398px" width="15" height="10" viewBox="0 0 15 10"><g fill="none" stroke="#000" stroke-width="1" shape-rendering="crispEdges"><path d="M1.500 7.500V4.500L2.500 3.500H5.500V7.500H1.500ZM7.500 3.500H11.500V7.500H8.500L7.500 6.500Z"/><path d="M2.500 3.500L3.500 1.500"/></g><path d="M11.500 3L13.500 .500" stroke="#000" stroke-width="1" fill="none"/><path d="M2.500 .700L13.500 8.700" stroke="#0000ff" stroke-width="1.700" fill="none"/><path d="M.700 8.700L11 .700" stroke="#0000ff" stroke-width="1.700" fill="none"/></svg>
<div class="hd" style="left:308px;top:412px;width:19px;height:19px;border-left-color:#696969"></div>
<span class="t" id="x76" style="left:313.4px;top:415.69px;font-size:11px;letter-spacing:0px;">10</span>
<span class="t" id="x77" style="left:350.0px;top:415.69px;font-size:11px;transform-origin:0 0;transform:scaleX(0.84);">PED</span>
<span class="t" id="x78" style="left:374.5px;top:415.69px;font-size:11px;letter-spacing:0.32px;">328</span>
<span class="t" id="x79" style="left:450.8px;top:415.69px;font-size:11px;transform-origin:0 0;transform:scaleX(0.886);">GLEITPUNKT</span>
<svg class="a" style="left:530px;top:416px" width="15" height="10" viewBox="0 0 15 10"><g fill="none" stroke="#000" stroke-width="1" shape-rendering="crispEdges"><path d="M1.500 7.500V4.500L2.500 3.500H5.500V7.500H1.500ZM7.500 3.500H11.500V7.500H8.500L7.500 6.500Z"/><path d="M2.500 3.500L3.500 1.500"/></g><path d="M11.500 3L13.500 .500" stroke="#000" stroke-width="1" fill="none"/><path d="M2.500 .700L13.500 8.700" stroke="#0000ff" stroke-width="1.700" fill="none"/><path d="M.700 8.700L11 .700" stroke="#0000ff" stroke-width="1.700" fill="none"/></svg>
<div class="hd" style="left:308px;top:430px;width:19px;height:19px;border-left-color:#696969"></div>
<span class="t" id="x80" style="left:313.4px;top:433.69px;font-size:11px;letter-spacing:0px;">11</span>
<span class="t" id="x81" style="left:350.0px;top:433.69px;font-size:11px;transform-origin:0 0;transform:scaleX(0.84);">PED</span>
<span class="t" id="x82" style="left:374.5px;top:433.69px;font-size:11px;letter-spacing:0.32px;">332</span>
<span class="t" id="x83" style="left:450.8px;top:433.69px;font-size:11px;transform-origin:0 0;transform:scaleX(0.886);">GLEITPUNKT</span>
<svg class="a" style="left:530px;top:434px" width="15" height="10" viewBox="0 0 15 10"><g fill="none" stroke="#000" stroke-width="1" shape-rendering="crispEdges"><path d="M1.500 7.500V4.500L2.500 3.500H5.500V7.500H1.500ZM7.500 3.500H11.500V7.500H8.500L7.500 6.500Z"/><path d="M2.500 3.500L3.500 1.500"/></g><path d="M11.500 3L13.500 .500" stroke="#000" stroke-width="1" fill="none"/><path d="M2.500 .700L13.500 8.700" stroke="#0000ff" stroke-width="1.700" fill="none"/><path d="M.700 8.700L11 .700" stroke="#0000ff" stroke-width="1.700" fill="none"/></svg>
<div class="hd" style="left:308px;top:448px;width:19px;height:19px;border-left-color:#696969"></div>
<span class="t" id="x84" style="left:313.4px;top:451.69px;font-size:11px;letter-spacing:0px;">12</span>
<span class="t" id="x85" style="left:350.0px;top:451.69px;font-size:11px;transform-origin:0 0;transform:scaleX(0.84);">PED</span>
<span class="t" id="x86" style="left:374.5px;top:451.69px;font-size:11px;letter-spacing:0.32px;">336</span>
<span class="t" id="x87" style="left:450.8px;top:451.69px;font-size:11px;transform-origin:0 0;transform:scaleX(0.886);">GLEITPUNKT</span>
<svg class="a" style="left:530px;top:452px" width="15" height="10" viewBox="0 0 15 10"><g fill="none" stroke="#000" stroke-width="1" shape-rendering="crispEdges"><path d="M1.500 7.500V4.500L2.500 3.500H5.500V7.500H1.500ZM7.500 3.500H11.500V7.500H8.500L7.500 6.500Z"/><path d="M2.500 3.500L3.500 1.500"/></g><path d="M11.500 3L13.500 .500" stroke="#000" stroke-width="1" fill="none"/><path d="M2.500 .700L13.500 8.700" stroke="#0000ff" stroke-width="1.700" fill="none"/><path d="M.700 8.700L11 .700" stroke="#0000ff" stroke-width="1.700" fill="none"/></svg>
<div class="hd" style="left:308px;top:466px;width:19px;height:19px;border-left-color:#696969"></div>
<span class="t" id="x88" style="left:313.4px;top:469.69px;font-size:11px;letter-spacing:0px;">13</span>
<span class="t" id="x89" style="left:350.0px;top:469.69px;font-size:11px;transform-origin:0 0;transform:scaleX(0.84);">PED</span>
<span class="t" id="x90" style="left:374.5px;top:469.69px;font-size:11px;letter-spacing:0.32px;">340</span>
<span class="t" id="x91" style="left:450.8px;top:469.69px;font-size:11px;transform-origin:0 0;transform:scaleX(0.886);">GLEITPUNKT</span>
<svg class="a" style="left:530px;top:470px" width="15" height="10" viewBox="0 0 15 10"><g fill="none" stroke="#000" stroke-width="1" shape-rendering="crispEdges"><path d="M1.500 7.500V4.500L2.500 3.500H5.500V7.500H1.500ZM7.500 3.500H11.500V7.500H8.500L7.500 6.500Z"/><path d="M2.500 3.500L3.500 1.500"/></g><path d="M11.500 3L13.500 .500" stroke="#000" stroke-width="1" fill="none"/><path d="M2.500 .700L13.500 8.700" stroke="#0000ff" stroke-width="1.700" fill="none"/><path d="M.700 8.700L11 .700" stroke="#0000ff" stroke-width="1.700" fill="none"/></svg>
<div class="hd" style="left:308px;top:484px;width:19px;height:19px;border-left-color:#696969"></div>
<span class="t" id="x92" style="left:313.4px;top:487.69px;font-size:11px;letter-spacing:0px;">14</span>
<span class="t" id="x93" style="left:350.0px;top:487.69px;font-size:11px;transform-origin:0 0;transform:scaleX(0.84);">PED</span>
<span class="t" id="x94" style="left:374.5px;top:487.69px;font-size:11px;letter-spacing:0.32px;">344</span>
<span class="t" id="x95" style="left:450.8px;top:487.69px;font-size:11px;transform-origin:0 0;transform:scaleX(0.886);">GLEITPUNKT</span>
<svg class="a" style="left:530px;top:488px" width="15" height="10" viewBox="0 0 15 10"><g fill="none" stroke="#000" stroke-width="1" shape-rendering="crispEdges"><path d="M1.500 7.500V4.500L2.500 3.500H5.500V7.500H1.500ZM7.500 3.500H11.500V7.500H8.500L7.500 6.500Z"/><path d="M2.500 3.500L3.500 1.500"/></g><path d="M11.500 3L13.500 .500" stroke="#000" stroke-width="1" fill="none"/><path d="M2.500 .700L13.500 8.700" stroke="#0000ff" stroke-width="1.700" fill="none"/><path d="M.700 8.700L11 .700" stroke="#0000ff" stroke-width="1.700" fill="none"/></svg>
<div class="hd" style="left:308px;top:502px;width:19px;height:19px;border-left-color:#696969"></div>
<span class="t" id="x96" style="left:313.4px;top:505.69px;font-size:11px;letter-spacing:0px;">15</span>
<span class="t" id="x97" style="left:350.0px;top:505.69px;font-size:11px;transform-origin:0 0;transform:scaleX(0.84);">PED</span>
<span class="t" id="x98" style="left:374.5px;top:505.69px;font-size:11px;letter-spacing:0.32px;">348</span>
<span class="t" id="x99" style="left:450.8px;top:505.69px;font-size:11px;transform-origin:0 0;transform:scaleX(0.886);">GLEITPUNKT</span>
<svg class="a" style="left:530px;top:506px" width="15" height="10" viewBox="0 0 15 10"><g fill="none" stroke="#000" stroke-width="1" shape-rendering="crispEdges"><path d="M1.500 7.500V4.500L2.500 3.500H5.500V7.500H1.500ZM7.500 3.500H11.500V7.500H8.500L7.500 6.500Z"/><path d="M2.500 3.500L3.500 1.500"/></g><path d="M11.500 3L13.500 .500" stroke="#000" stroke-width="1" fill="none"/><path d="M2.500 .700L13.500 8.700" stroke="#0000ff" stroke-width="1.700" fill="none"/><path d="M.700 8.700L11 .700" stroke="#0000ff" stroke-width="1.700" fill="none"/></svg>
<div class="hd" style="left:308px;top:520px;width:19px;height:19px;border-left-color:#696969"></div>
<span class="t" id="x100" style="left:313.4px;top:523.69px;font-size:11px;letter-spacing:0px;">16</span>
<span class="t" id="x101" style="left:350.0px;top:523.69px;font-size:11px;transform-origin:0 0;transform:scaleX(0.84);">PED</span>
<span class="t" id="x102" style="left:374.5px;top:523.69px;font-size:11px;letter-spacing:0.32px;">352</span>
<span class="t" id="x103" style="left:450.8px;top:523.69px;font-size:11px;transform-origin:0 0;transform:scaleX(0.886);">GLEITPUNKT</span>
<svg class="a" style="left:530px;top:524px" width="15" height="10" viewBox="0 0 15 10"><g fill="none" stroke="#000" stroke-width="1" shape-rendering="crispEdges"><path d="M1.500 7.500V4.500L2.500 3.500H5.500V7.500H1.500ZM7.500 3.500H11.500V7.500H8.500L7.500 6.500Z"/><path d="M2.500 3.500L3.500 1.500"/></g><path d="M11.500 3L13.500 .500" stroke="#000" stroke-width="1" fill="none"/><path d="M2.500 .700L13.500 8.700" stroke="#0000ff" stroke-width="1.700" fill="none"/><path d="M.700 8.700L11 .700" stroke="#0000ff" stroke-width="1.700" fill="none"/></svg>
<div class="hd" style="left:308px;top:538px;width:19px;height:19px;border-left-color:#696969"></div>
<span class="t" id="x104" style="left:313.4px;top:541.69px;font-size:11px;letter-spacing:0px;">17</span>
<span class="t" id="x105" style="left:350.0px;top:541.69px;font-size:11px;transform-origin:0 0;transform:scaleX(0.84);">PED</span>
<span class="t" id="x106" style="left:374.5px;top:541.69px;font-size:11px;letter-spacing:0.32px;">356</span>
<span class="t" id="x107" style="left:450.8px;top:541.69px;font-size:11px;transform-origin:0 0;transform:scaleX(0.886);">GLEITPUNKT</span>
<svg class="a" style="left:530px;top:542px" width="15" height="10" viewBox="0 0 15 10"><g fill="none" stroke="#000" stroke-width="1" shape-rendering="crispEdges"><path d="M1.500 7.500V4.500L2.500 3.500H5.500V7.500H1.500ZM7.500 3.500H11.500V7.500H8.500L7.500 6.500Z"/><path d="M2.500 3.500L3.500 1.500"/></g><path d="M11.500 3L13.500 .500" stroke="#000" stroke-width="1" fill="none"/><path d="M2.500 .700L13.500 8.700" stroke="#0000ff" stroke-width="1.700" fill="none"/><path d="M.700 8.700L11 .700" stroke="#0000ff" stroke-width="1.700" fill="none"/></svg>
<div class="a" style="left:346px;top:252px;width:53px;height:16px;border:solid #000;border-width:1px 2px 2px 1px"></div>
<div class="a" style="left:343px;top:249px;width:270px;height:72px;border:3px solid #ff0000"></div>
<div class="a" style="left:343px;top:322px;width:270px;height:74px;border:3px solid #77cc33"></div>
<div class="a" style="left:1020px;top:232px;width:18px;height:313px;background:linear-gradient(90deg,#f8f8f8 0,#e8e8e8 2px,#f1f1f1 8px,#f1f1f1 100%)"></div>
<div class="a" style="left:1021px;top:250px;width:15px;height:157px;border:1px solid #979797;border-radius:2px;background:linear-gradient(90deg,#f6f6f6 0,#ebebed 45%,#d6d6da 55%,#dedee2 100%);box-shadow:inset 0 0 0 1px rgba(255,255,255,.6)"></div>
<svg class="a" style="left:1025px;top:324px" width="7" height="8" viewBox="0 0 7 8" shape-rendering="crispEdges"><path d="M0 .500h7M0 3.500h7M0 6.500h7" stroke="#505050" stroke-width="1"/><path d="M0 1.500h7M0 4.500h7M0 7.500h7" stroke="#f8f8f8" stroke-width="1"/></svg>
<svg class="a" style="left:1026px;top:239px" width="7" height="4" viewBox="0 0 7 4"><path d="M0 4L3.500 0L7 4Z" fill="#303030"/></svg>
<svg class="a" style="left:1026px;top:535px" width="7" height="4" viewBox="0 0 7 4"><path d="M0 0L3.500 4L7 0Z" fill="#303030"/></svg>
</div>
<!-- status bar -->
<div class="a" style="left:297px;top:730px;width:927px;height:1px;background:#fff"></div>
<span class="t" id="x108" style="left:298.7px;top:736.84px;font-size:12px;letter-spacing:-0.057px;">UMG96RM-PN\SIMATIC 300-Station\...\S7-Programm(2)</span>
<div class="a" style="left:784px;top:734px;width:23px;height:17px;background:#ababab"></div>
<div class="sp" style="left:807px;width:33px"></div>
<div class="a" style="left:841px;top:734px;width:33px;height:17px;background:#ababab"></div>
<svg class="a" style="left:849px;top:734px" width="16" height="15" viewBox="0 0 17 17" preserveAspectRatio="none"><path d="M8.500 1L16 8.500L8.500 16L1 8.500Z" fill="#fff" stroke="#000080" stroke-width="1.200"/><rect x="7" y="5" width="3" height="7" fill="#000080"/></svg>
<div class="sp" style="left:874px;width:99px"></div>
<div class="a" style="left:877px;top:735px;width:15px;height:14px;background:#00e600"></div>
<span class="t" id="x109" style="left:876.8px;top:736.84px;font-size:12px;letter-spacing:-0.8px;">RUN</span>
<div class="sp" style="left:975px;width:70px"></div>
<span class="t" id="x110" style="left:977.8px;top:736.84px;font-size:12px;letter-spacing:-0.156px;">Abs &lt; 5.2</span>
<div class="sp" style="left:1048px;width:116px"></div>
<div class="sp" style="left:1167px;width:57px;border-right:0"></div>
<svg class="a" style="left:1211px;top:738px" width="13" height="13" viewBox="0 0 13 13"><path d="M13 0L0 13M13 4L4 13M13 8L8 13" stroke="#909090" stroke-width="1.300" fill="none"/><path d="M14 0L1 13M14 4L5 13M14 8L9 13" stroke="#fff" stroke-width=".800" fill="none"/></svg>
</body></html>
